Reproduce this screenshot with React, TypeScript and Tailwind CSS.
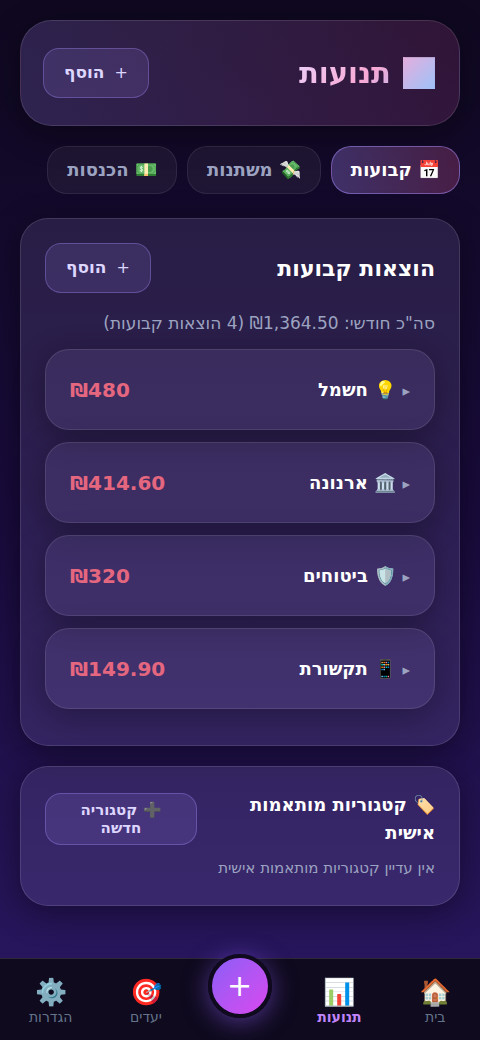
import * as React from "react"
import { clsx } from "clsx"

const tabs = [
    { id: "fixed", icon: "📅", label: "קבועות" },
    { id: "variable", icon: "💸", label: "משתנות" },
    { id: "income", icon: "💵", label: "הכנסות" },
]

const expenses = [
    { icon: "💡", name: "חשמל", amount: "480" },
    { icon: "🏛️", name: "ארנונה", amount: "414.60" },
    { icon: "🛡️", name: "ביטוחים", amount: "320" },
    { icon: "📱", name: "תקשורת", amount: "149.90" },
]

function GhostButton({ className, children }: { className?: string; children: React.ReactNode }) {
    return (
        <button
            type="button"
            className={clsx(
                "rounded-2xl border border-[#a78bfa]/35 bg-[#a78bfa]/15 text-center font-bold text-[#ddd6fe]",
                className
            )}
        >
            {children}
        </button>
    )
}

function AddButton() {
    return (
        <GhostButton className="flex h-[50px] items-center gap-2.5 px-5 text-[17px]">
            <span className="text-base font-normal">+</span>
            הוסף
        </GhostButton>
    )
}

function Card({ children }: { children: React.ReactNode }) {
    return (
        <section className="rounded-[28px] border border-white/12 bg-[#c4b5fd]/12 p-6 shadow-[0_8px_32px_rgba(0,0,0,0.4)]">
            {children}
        </section>
    )
}

function NavItem({ icon, label, active }: { icon: string; label: string; active?: boolean }) {
    return (
        <a
            href="#"
            aria-current={active ? "page" : undefined}
            className={clsx(
                "flex flex-col items-center px-3 text-sm leading-4",
                active ? "font-bold text-[#c084fc]" : "text-[#64748b]"
            )}
        >
            <span className="text-[26px] leading-[34px]">{icon}</span>
            {label}
        </a>
    )
}

export default function App() {
    const [tab, setTab] = React.useState("fixed")

    return (
        <div
            dir="rtl"
            lang="he"
            className="flex min-h-screen flex-col bg-linear-to-b from-[#0f0820] via-[#190b3c] to-[#2a1862] font-['DejaVu_Sans',sans-serif] text-white"
        >
            <main className="flex flex-1 flex-col px-5 pt-5 pb-8">
                <header className="flex items-center justify-between rounded-[32px] border border-white/12 bg-linear-to-l from-[#ec5fb4]/15 to-[#a78bfa]/20 px-[22px] py-[27px] shadow-[0_8px_32px_rgba(0,0,0,0.4)]">
                    <h1 className="bg-[linear-gradient(135deg,#e9d5ff,#f9a8d4,#93c5fd)] bg-clip-text text-[29px] leading-[48px] font-bold text-transparent">
                        📊 תנועות
                    </h1>
                    <AddButton />
                </header>

                <div role="tablist" className="mt-5 flex gap-2.5">
                    {tabs.map((t) => (
                        <button
                            key={t.id}
                            type="button"
                            role="tab"
                            aria-selected={tab === t.id}
                            onClick={() => setTab(t.id)}
                            className={clsx(
                                "h-12 rounded-[20px] border px-[19px] text-lg font-bold whitespace-nowrap",
                                tab === t.id
                                    ? "border-[#a78bfa]/50 bg-linear-to-l from-[#f0609f]/24 to-[#a78bfa]/30 text-white"
                                    : "border-white/8 bg-white/5 text-[#9ca3c0]"
                            )}
                        >
                            {t.icon} {t.label}
                        </button>
                    ))}
                </div>

                <div className="mt-6 flex flex-col gap-5">
                    <Card>
                        <div className="flex items-center justify-between">
                            <h2 className="text-[22px] font-bold">הוצאות קבועות</h2>
                            <AddButton />
                        </div>
                        <p className="mt-4 text-[17px] leading-7 text-[#9ca3c0]">
                            סה"כ חודשי: ₪1,364.50 (4 הוצאות קבועות)
                        </p>
                        <ul className="mt-3">
                            {expenses.map((e) => (
                                <li key={e.name} className="mb-3">
                                    <button
                                        type="button"
                                        className="flex h-[81px] w-full items-center justify-between rounded-3xl border border-white/10 bg-[#c4b5fd]/10 px-6 shadow-[0_8px_32px_rgba(0,0,0,0.3)]"
                                    >
                                        <span className="text-lg font-bold">
                                            <span className="text-[15px] font-normal text-[#9ca3c0]">▸</span> {e.icon} {e.name}
                                        </span>
                                        <span className="text-xl font-bold text-[#e5677f]">₪{e.amount}</span>
                                    </button>
                                </li>
                            ))}
                        </ul>
                    </Card>

                    <Card>
                        <div className="flex items-center justify-between gap-3">
                            <h3 className="text-lg leading-7 font-bold">🏷️ קטגוריות מותאמות אישית</h3>
                            <GhostButton className="h-[52px] w-[152px] shrink-0 px-5 text-[15px] leading-[18px]">
                                ➕ קטגוריה חדשה
                            </GhostButton>
                        </div>
                        <p className="mt-2 text-[15px] leading-[26px] text-[#9ca3c0]">אין עדיין קטגוריות מותאמות אישית</p>
                    </Card>
                </div>
            </main>

            <nav className="sticky bottom-0 flex h-[82px] items-center justify-around border-t border-white/12 bg-[#0f0a1e]">
                <NavItem icon="🏠" label="בית" />
                <NavItem icon="📊" label="תנועות" active />
                <button
                    type="button"
                    aria-label="הוספת תנועה"
                    className="mb-7 size-16 rounded-full border-4 border-[#0f0a1e] bg-linear-to-br from-[#8b5cf6] to-[#d946ef] text-3xl leading-none shadow-[0_4px_24px_rgba(139,92,246,0.5)]"
                >
                    +
                </button>
                <NavItem icon="🎯" label="יעדים" />
                <NavItem icon="⚙️" label="הגדרות" />
            </nav>
        </div>
    )
}
